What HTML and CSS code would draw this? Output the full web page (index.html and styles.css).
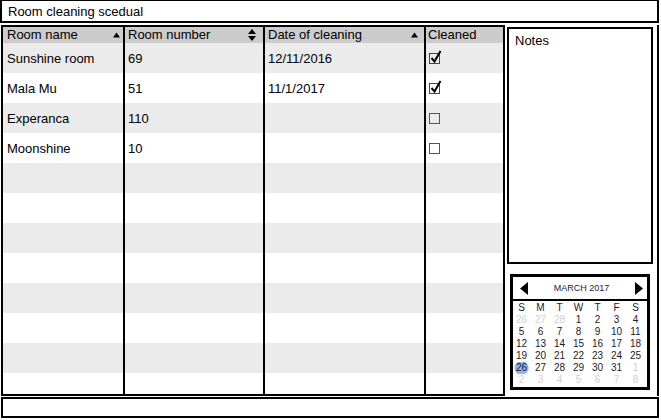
FILE: index.html
```html
<!DOCTYPE html>
<html>
<head>
<meta charset="utf-8">
<link rel="stylesheet" href="styles.css">
</head>
<body>
<div class="app">
  <div class="title">Room cleaning scedual</div>
  <div class="main">
    <div class="table">
      <div class="row head">
        <div class="cell c1">Room name<svg class="sort s1" width="7" height="6" viewBox="0 0 7 6"><path d="M0 5.5 L3.5 0.5 L7 5.5Z" fill="#000"/></svg></div>
        <div class="cell c2">Room number<svg class="sort s2" width="8" height="12" viewBox="0 0 8 12"><path d="M0 5 L4 0 L8 5Z M0 7 L4 12 L8 7Z" fill="#000"/></svg></div>
        <div class="cell c3">Date of cleaning<svg class="sort s3" width="7" height="6" viewBox="0 0 7 6"><path d="M0 5.5 L3.5 0.5 L7 5.5Z" fill="#000"/></svg></div>
        <div class="cell c4">Cleaned</div>
      </div>
      <div class="row odd">
        <div class="cell c1">Sunshine room</div>
        <div class="cell c2">69</div>
        <div class="cell c3">12/11/2016</div>
        <div class="cell c4"><svg class="chk" width="14" height="14" viewBox="0 0 14 14"><rect x="1.5" y="3.5" width="10" height="10" fill="none" stroke="#444"/><path d="M3.5 8 L6.5 11.5 L12.5 1" fill="none" stroke="#000" stroke-width="2"/></svg></div>
      </div>
      <div class="row">
        <div class="cell c1">Mala Mu</div>
        <div class="cell c2">51</div>
        <div class="cell c3">11/1/2017</div>
        <div class="cell c4"><svg class="chk" width="14" height="14" viewBox="0 0 14 14"><rect x="1.5" y="3.5" width="10" height="10" fill="none" stroke="#444"/><path d="M3.5 8 L6.5 11.5 L12.5 1" fill="none" stroke="#000" stroke-width="2"/></svg></div>
      </div>
      <div class="row odd">
        <div class="cell c1">Experanca</div>
        <div class="cell c2">110</div>
        <div class="cell c3"></div>
        <div class="cell c4"><svg class="chk" width="14" height="14" viewBox="0 0 14 14"><rect x="1.5" y="3.5" width="10" height="10" fill="none" stroke="#555"/></svg></div>
      </div>
      <div class="row">
        <div class="cell c1">Moonshine</div>
        <div class="cell c2">10</div>
        <div class="cell c3"></div>
        <div class="cell c4"><svg class="chk" width="14" height="14" viewBox="0 0 14 14"><rect x="1.5" y="3.5" width="10" height="10" fill="none" stroke="#555"/></svg></div>
      </div>
      <div class="row odd"><div class="cell c1"></div><div class="cell c2"></div><div class="cell c3"></div><div class="cell c4"></div></div>
      <div class="row"><div class="cell c1"></div><div class="cell c2"></div><div class="cell c3"></div><div class="cell c4"></div></div>
      <div class="row odd"><div class="cell c1"></div><div class="cell c2"></div><div class="cell c3"></div><div class="cell c4"></div></div>
      <div class="row"><div class="cell c1"></div><div class="cell c2"></div><div class="cell c3"></div><div class="cell c4"></div></div>
      <div class="row odd"><div class="cell c1"></div><div class="cell c2"></div><div class="cell c3"></div><div class="cell c4"></div></div>
      <div class="row"><div class="cell c1"></div><div class="cell c2"></div><div class="cell c3"></div><div class="cell c4"></div></div>
      <div class="row odd"><div class="cell c1"></div><div class="cell c2"></div><div class="cell c3"></div><div class="cell c4"></div></div>
      <div class="row"><div class="cell c1"></div><div class="cell c2"></div><div class="cell c3"></div><div class="cell c4"></div></div>
    </div>
    <div class="side">
      <div class="notes">Notes</div>
      <div class="cal">
        <div class="cal-head">
          <svg width="8" height="13" viewBox="0 0 8 13"><path d="M8 0 L0 6.5 L8 13Z" fill="#000"/></svg>
          <span class="month">MARCH 2017</span>
          <svg width="8" height="13" viewBox="0 0 8 13"><path d="M0 0 L8 6.5 L0 13Z" fill="#000"/></svg>
        </div>
        <div class="days">
          <span>S</span><span>M</span><span>T</span><span>W</span><span>T</span><span>F</span><span>S</span>
          <span class="off">26</span><span class="off">27</span><span class="off">28</span><span>1</span><span>2</span><span>3</span><span>4</span>
          <span>5</span><span>6</span><span>7</span><span>8</span><span>9</span><span>10</span><span>11</span>
          <span>12</span><span>13</span><span>14</span><span>15</span><span>16</span><span>17</span><span>18</span>
          <span>19</span><span>20</span><span>21</span><span>22</span><span>23</span><span>24</span><span>25</span>
          <span class="sel">26</span><span>27</span><span>28</span><span>29</span><span>30</span><span>31</span><span class="off">1</span>
          <span class="off">2</span><span class="off">3</span><span class="off">4</span><span class="off">5</span><span class="off">6</span><span class="off">7</span><span class="off">8</span>
        </div>
      </div>
    </div>
  </div>
  <div class="footer"></div>
</div>
</body>
</html>
```

FILE: styles.css
```css
* { box-sizing: border-box; }
html, body { margin: 0; padding: 0; background: #fff; }
body {
  font-family: "Liberation Sans", Arial, sans-serif;
  font-size: 13px;
  color: #000;
}
.app {
  width: 661px;
  height: 420px;
  display: flex;
  flex-direction: column;
  overflow: hidden;
}
.title {
  width: 659px;
  height: 23px;
  border: 2px solid #000;
  border-top-width: 1px;
  padding-left: 6px;
  padding-top: 2px;
  line-height: 18px;
}
.main {
  display: flex;
  margin-top: 2px;
  height: 371px;
}
.table {
  margin-left: 1px;
  width: 504px;
  height: 371px;
  border: 2px solid #000;
  overflow: hidden;
}
.row {
  display: grid;
  grid-template-columns: 122px 140px 161px 77px;
  height: 30px;
}
.row.odd { background: #ebebeb; }
.row.head { height: 16px; background: #cccccc; }
.cell {
  display: flex;
  align-items: center;
  padding-left: 4px;
  border-right: 2px solid #000;
  white-space: nowrap;
}
.cell.c2, .cell.c3, .cell.c4 { padding-left: 3px; }
.cell.c4 { border-right: none; padding-left: 2px; }
.head .cell { justify-content: space-between; line-height: 16px; }
.sort.s1 { margin-right: 3px; margin-top: -1px; }
.sort.s2 { margin-right: 7px; }
.sort.s3 { margin-right: 6px; margin-top: -1px; }
.chk { display: block; margin-top: -3px; }
.side {
  width: 154px;
  height: 371px;
  border-right: 2px solid #000;
  display: flex;
  flex-direction: column;
}
.notes {
  margin-left: 2px;
  margin-top: 2px;
  width: 146px;
  height: 237px;
  border: 2px solid #000;
  padding: 4px 0 0 6px;
}
.cal {
  margin-left: 5px;
  margin-top: 10px;
  width: 140px;
  height: 116px;
  border: 3px solid #000;
}
.cal-head {
  height: 24px;
  border-bottom: 2px solid #000;
  display: flex;
  align-items: center;
  justify-content: space-between;
  padding: 0 4px 0 7px;
}
.cal-head svg { display: block; }
.month { font-size: 9px; color: #1a1a3a; }
.days {
  display: grid;
  grid-template-columns: repeat(7, 19px);
  grid-auto-rows: 12px;
  margin-left: -1px;
  padding-top: 1px;
  font-size: 10px;
  color: #1a1a2a;
}
.days span {
  display: flex;
  align-items: center;
  justify-content: center;
  line-height: 12px;
}
.days .off { color: #cfcfcf; }
.days .sel {
  background: radial-gradient(circle at center, #8fb5ea 0, #8fb5ea 6.5px, transparent 7.5px);
}
.footer {
  margin-left: 1px;
  margin-top: 1px;
  width: 658px;
  height: 21px;
  border: 2px solid #000;
}
```
